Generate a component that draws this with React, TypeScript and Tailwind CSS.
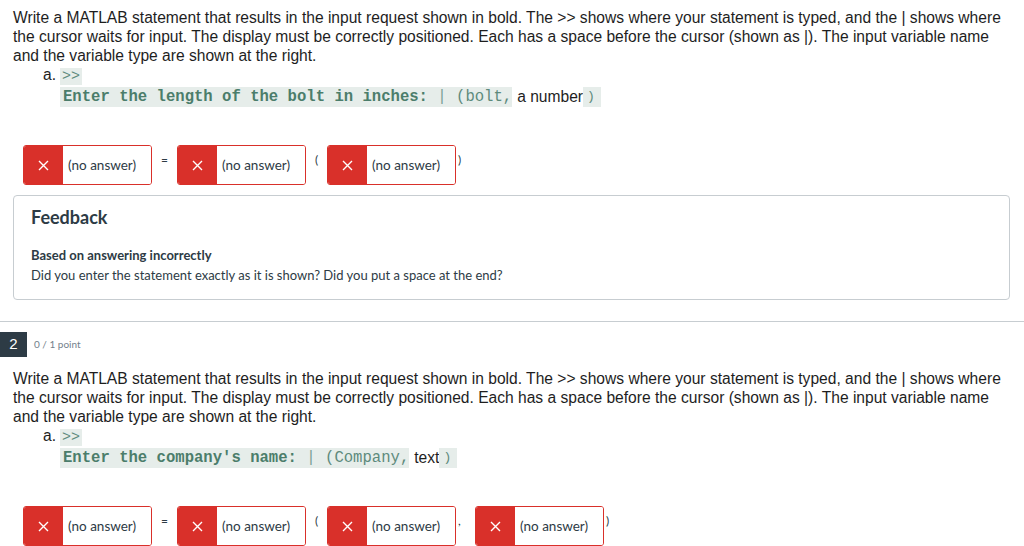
import React from "react";

function Blank() {
  return (
    <div className="flex h-[40px] w-[129px] rounded-[3px] border-[1.5px] border-[#d9302a] overflow-hidden">
      <div className="flex w-[39px] items-center justify-center bg-[#d9302a] text-white">
        <svg width="11" height="11" viewBox="0 0 11 11" aria-hidden>
          <path d="M1 1 L10 10 M10 1 L1 10" stroke="white" strokeWidth="1.4" fill="none" />
        </svg>
      </div>
      <div className="flex flex-1 items-center bg-white pl-[5px] text-[13.5px] text-[#2d3b45] font-['Lato',sans-serif]">
        (no answer)
      </div>
    </div>
  );
}

function Sym({ c, w, align = "center" }: { c: string; w: string; align?: "center" | "left" }) {
  return (
    <span
      className={`${w} pt-[6px] text-[12px] text-[#2d3b45] font-['Lato',sans-serif] ${
        align === "left" ? "text-left pl-[2px]" : "text-center"
      }`}
    >
      {c}
    </span>
  );
}

const MONO = "font-['Liberation_Mono','Courier_New',monospace]";

function Prompt({ lines, prompt, varName, varType }: { lines: string[]; prompt: string; varName: string; varType: string }) {
  return (
    <div className="px-[13px] text-[15.6px] leading-[19px] text-[#1e1e1e] font-['Liberation_Sans',Arial,sans-serif]">
      {lines.map((l, i) => (
        <div key={i} className="whitespace-nowrap">{l}</div>
      ))}
      <div className="flex pl-[30px] leading-[20px]">
        <span className="w-[17px]">a.</span>
        <div>
          <div>
            <span className={`${MONO} bg-[#e6edea] px-[2px] text-[15px] text-[#5d8a7c]`}>&gt;&gt;</span>
          </div>
          <div className="flex items-center whitespace-pre">
            <span className={`${MONO} bg-[#e6edea] pl-[3px] text-[15.6px] text-[#4b7d6b]`}>
              <b>{prompt}</b>
              <span className="text-[#7aa096]"> | </span>
              <span className="text-[#5d8a7c]">({varName},</span>
            </span>
            <span className="pl-[5px]">{varType}</span>
            <span className={`${MONO} bg-[#e6edea] pl-[4px] pr-[6px] text-[13px] text-[#5d8a7c]`}>)</span>
          </div>
        </div>
      </div>
    </div>
  );
}

export default function App() {
  const lines = [
    "Write a MATLAB statement that results in the input request shown in bold. The >> shows where your statement is typed, and the | shows where",
    "the cursor waits for input. The display must be correctly positioned. Each has a space before the cursor (shown as |). The input variable name",
    "and the variable type are shown at the right.",
  ];
  return (
    <div className="h-[546px] w-[1024px] overflow-hidden bg-white">
      <div className="pt-[8px]">
        <Prompt lines={lines} prompt="Enter the length of the bolt in inches:" varName="bolt" varType="a number" />
      </div>

      <div className="mt-[38px] flex items-start pl-[23px]">
        <Blank />
        <Sym c="=" w="w-[25px]" />
        <Blank />
        <Sym c="(" w="w-[21px]" />
        <Blank />
        <Sym c=")" w="w-[10px]" align="left" />
      </div>

      <div className="mx-[13px] mt-[10px] h-[105px] w-[997px] rounded-[4px] border border-[#c7cdd1] px-[17px] pt-[9px] font-['Lato',sans-serif] text-[#2d3b45]">
        <div className="text-[18px] font-bold leading-[24px]">Feedback</div>
        <div className="mt-[17px] text-[13px] font-bold leading-[18px]">Based on answering incorrectly</div>
        <div className="mt-[2px] text-[13px] leading-[18px]">
          Did you enter the statement exactly as it is shown? Did you put a space at the end?
        </div>
      </div>

      <div className="mt-[21px] h-px w-full bg-[#c7cdd1]" />

      <div className="mt-[10px] flex items-center">
        <div className="flex h-[25px] w-[27px] items-center justify-center bg-[#2d3b45] text-[15px] text-white font-['Liberation_Sans',Arial,sans-serif]">
          2
        </div>
        <span className="ml-[7px] text-[10px] text-[#73818c] font-['Lato',sans-serif]">0 / 1 point</span>
      </div>

      <div className="pt-[12px]">
        <Prompt lines={lines} prompt="Enter the company's name:" varName="Company" varType="text" />
      </div>

      <div className="mt-[38px] flex items-start pl-[23px]">
        <Blank />
        <Sym c="=" w="w-[25px]" />
        <Blank />
        <Sym c="(" w="w-[21px]" />
        <Blank />
        <Sym c="," w="w-[19px]" align="left" />
        <Blank />
        <Sym c=")" w="w-[10px]" align="left" />
      </div>
    </div>
  );
}
